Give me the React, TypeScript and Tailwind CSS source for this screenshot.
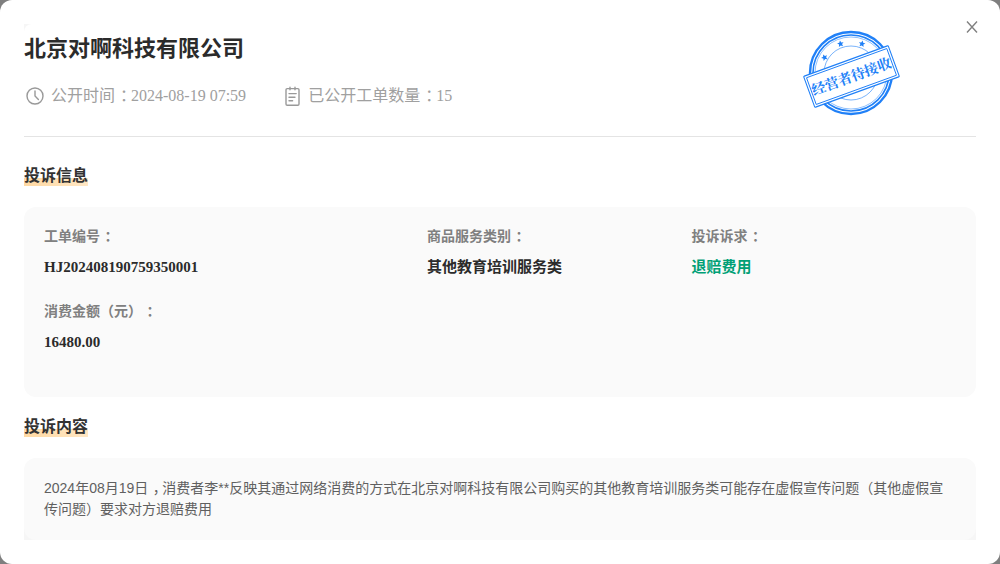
import type { ReactNode } from "react";

const SANS = "font-['Liberation_Sans','Noto_Sans_CJK_SC',sans-serif]";
const SERIF = "font-['Liberation_Serif','Noto_Sans_CJK_SC',serif]";

/** Full-width punctuation, centred in its own cell. */
function Mark({ children }: { children: ReactNode }) {
  return (
    <span className="inline-block w-[1em] pl-0.5 text-center leading-none [font-feature-settings:'halt']">{children}</span>
  );
}

function ClockIcon() {
  return (
    <svg className="size-[22px] shrink-0" viewBox="0 0 22 22" fill="none" stroke="#999" strokeWidth="1.4" strokeLinecap="round" aria-hidden="true">
      <circle cx="11" cy="11" r="8" />
      <path d="M11 6v5l3.4 3.6" />
    </svg>
  );
}

function NoteIcon() {
  return (
    <svg className="size-[22px] shrink-0" viewBox="0 0 22 22" fill="none" stroke="#999" strokeWidth="1.4" strokeLinecap="round" aria-hidden="true">
      <rect x="5" y="3.6" width="13" height="16.6" rx="1.2" />
      <path d="M9 2.2v2.6M14 2.2v2.6M8 8.6h7.2M8 12.2h6M8 15.7h3.6" />
    </svg>
  );
}

const STARS: [number, number][] = [
  [24.5, 33.5],
  [40.5, 19.8],
  [62, 19.8],
];

function Seal() {
  return (
    <svg className="h-[100px] w-[104px] shrink-0" viewBox="0 0 104 100" fill="none" stroke="#2080f7" role="img" aria-label="经营者待接收">
      <circle cx="51" cy="49" r="41" strokeWidth="2.4" />
      <circle cx="51" cy="49" r="38" strokeWidth="1.6" />
      <circle cx="51" cy="49" r="36" strokeWidth="0.5" />
      <circle cx="51" cy="49" r="27" strokeWidth="0.6" />
      {STARS.map(([x, y]) => (
        <path
          key={x}
          transform={`translate(${x} ${y}) rotate(${(x - 51) * 0.9})`}
          d="M0-3.4 1-1.2 3.3-1 1.5.5 2.1 2.8 0 1.6-2.1 2.8-1.5.5-3.3-1-1-1.2z"
          fill="#2080f7"
          stroke="none"
        />
      ))}
      <g transform="rotate(-20 51.5 52.5)">
        <rect x="6.5" y="36" width="90" height="33" rx="0.8" fill="#fff" strokeWidth="1.1" />
        <rect x="8.8" y="38.3" width="85.4" height="28.4" strokeWidth="0.9" />
        <text
          x="51.5"
          y="57.5"
          textAnchor="middle"
          fill="#2080f7"
          stroke="none"
          className="font-['Noto_Serif_CJK_SC','Noto_Sans_CJK_SC',serif] text-[14px] font-bold"
        >
          经营者待接收
        </text>
      </g>
    </svg>
  );
}

function SectionTitle({ children }: { children: ReactNode }) {
  return (
    <h2 className="flex text-[16px] leading-6 font-bold text-[#333]">
      <span className="bg-linear-to-r from-[#ffd9a3] to-[#ffe7c4] bg-[length:100%_8px] bg-[position:0_14px] bg-no-repeat">
        {children}
      </span>
    </h2>
  );
}

function Field({ label, value, accent = false }: { label: string; value: string; accent?: boolean }) {
  return (
    <div>
      <dt className="text-[14px] leading-5 font-bold text-[#808080]">
        {label}
        <Mark>：</Mark>
      </dt>
      <dd className={`mt-2.5 text-[15px] leading-5 font-bold ${accent ? "text-[#00a076]" : "text-[#2b2b2b]"}`}>
        {value}
      </dd>
    </div>
  );
}

export default function App() {
  return (
    <div className="min-h-screen bg-[#7f7f7f]">
      <main role="dialog" aria-labelledby="company" className={`relative min-h-screen rounded-xl bg-white p-6 ${SERIF}`}>
        <button type="button" aria-label="关闭" className="absolute top-[15px] right-4 flex size-6 items-center justify-center text-[#808080]">
          <svg className="size-3" viewBox="0 0 12 12" stroke="currentColor" strokeWidth="1.4" aria-hidden="true">
            <path d="M1 0.5 11 11.5M11 0.5 1 11.5" />
          </svg>
        </button>

        <div className="bg-[#f6f6f6]">
          <div className="rounded-tl-lg bg-white">
            <header className="flex justify-between border-b border-[#e4e4e4] pr-[72px] pb-3">
              <div className="pt-[9px]">
                <h1 id="company" className="text-[22px] leading-8 font-bold text-[#2b2b2b]">
                  北京对啊科技有限公司
                </h1>
                <div className="mt-5 flex gap-[35px] text-[16px] leading-[22px] text-[#a0a0a0]">
                  <p className="flex items-center gap-[5px]">
                    <ClockIcon />
                    <span>
                      公开时间<Mark>：</Mark>2024-08-19 07:59
                    </span>
                  </p>
                  <p className="flex items-center gap-[5px]">
                    <NoteIcon />
                    <span>
                      已公开工单数量<Mark>：</Mark>15
                    </span>
                  </p>
                </div>
              </div>
              <Seal />
            </header>

            <section className="pt-[27px]">
              <SectionTitle>投诉信息</SectionTitle>
              <dl className="mt-[19px] grid grid-cols-[42fr_29fr_29fr] gap-y-[25px] rounded-xl bg-[#fafafa] px-5 pt-5 pb-[45px]">
                <Field label="工单编号" value="HJ202408190759350001" />
                <Field label="商品服务类别" value="其他教育培训服务类" />
                <Field label="投诉诉求" value="退赔费用" accent />
                <Field label="消费金额（元）" value="16480.00" />
              </dl>
            </section>

            <section className="pt-[18px]">
              <SectionTitle>投诉内容</SectionTitle>
              <div className="mt-[19px] bg-linear-to-t from-[#f6f6f6] from-50% to-white to-50%">
                <p className={`rounded-xl bg-[#fafafa] p-5 text-[14px] leading-[21px] text-[#606060] ${SANS}`}>
                  2024年08月19日<Mark>，</Mark>消费者李**反映其通过网络消费的方式在北京对啊科技有限公司购买的其他教育培训服务类可能存在虚假宣传问题（其他虚假宣传问题）要求对方退赔费用
                </p>
              </div>
            </section>
          </div>
        </div>
      </main>
    </div>
  );
}
